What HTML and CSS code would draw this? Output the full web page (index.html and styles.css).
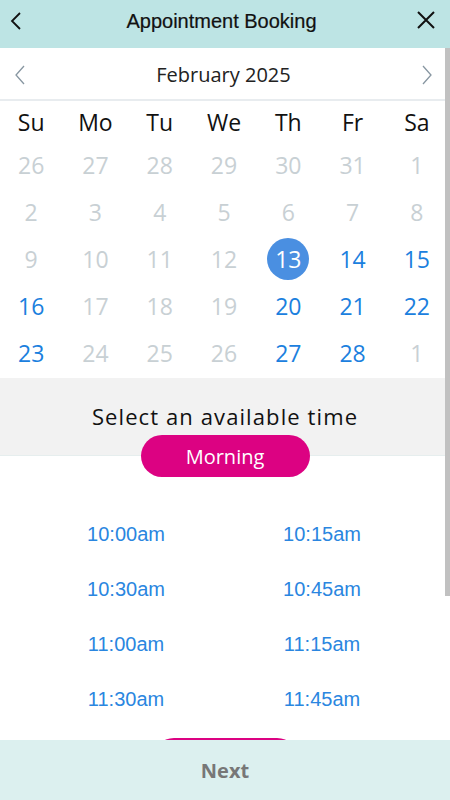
FILE: index.html
```html
<!DOCTYPE html>
<html lang="en">
<head>
<meta charset="utf-8">
<title>Appointment Booking</title>
<link rel="stylesheet" href="styles.css">
</head>
<body>
<div class="app">
  <header class="topbar">
    <button class="icon-btn back" aria-label="Back">
      <svg width="14" height="20" viewBox="0 0 14 20"><path d="M11 2 L3 10 L11 18" fill="none" stroke="#111" stroke-width="1.8"/></svg>
    </button>
    <h1 class="title">Appointment Booking</h1>
    <button class="icon-btn close" aria-label="Close">
      <svg width="20" height="20" viewBox="0 0 20 20"><path d="M2 2 L18 18 M18 2 L2 18" fill="none" stroke="#111" stroke-width="2"/></svg>
    </button>
  </header>

  <main class="content">
    <div class="month-row">
      <span class="chev">
        <svg width="12" height="20" viewBox="0 0 12 20"><path d="M10 1 L2 10 L10 19" fill="none" stroke="#8796a1" stroke-width="1.3"/></svg>
      </span>
      <span class="month">February 2025</span>
      <span class="chev">
        <svg width="12" height="20" viewBox="0 0 12 20"><path d="M2 1 L10 10 L2 19" fill="none" stroke="#8796a1" stroke-width="1.3"/></svg>
      </span>
    </div>

    <div class="calendar">
      <div class="wd">Su</div><div class="wd">Mo</div><div class="wd">Tu</div><div class="wd">We</div><div class="wd">Th</div><div class="wd">Fr</div><div class="wd">Sa</div>

      <div class="d off">26</div><div class="d off">27</div><div class="d off">28</div><div class="d off">29</div><div class="d off">30</div><div class="d off">31</div><div class="d off">1</div>
      <div class="d off">2</div><div class="d off">3</div><div class="d off">4</div><div class="d off">5</div><div class="d off">6</div><div class="d off">7</div><div class="d off">8</div>
      <div class="d off">9</div><div class="d off">10</div><div class="d off">11</div><div class="d off">12</div><div class="d on"><span class="sel">13</span></div><div class="d on">14</div><div class="d on">15</div>
      <div class="d on">16</div><div class="d off">17</div><div class="d off">18</div><div class="d off">19</div><div class="d on">20</div><div class="d on">21</div><div class="d on">22</div>
      <div class="d on">23</div><div class="d off">24</div><div class="d off">25</div><div class="d off">26</div><div class="d on">27</div><div class="d on">28</div><div class="d off">1</div>
    </div>

    <section class="time-head">
      <h2 class="time-title">Select an available time</h2>
    </section>
    <div class="pill-row">
      <span class="pill">Morning</span>
    </div>

    <div class="slots">
      <div class="slot">10:00am</div><div class="slot">10:15am</div>
      <div class="slot">10:30am</div><div class="slot">10:45am</div>
      <div class="slot">11:00am</div><div class="slot">11:15am</div>
      <div class="slot">11:30am</div><div class="slot">11:45am</div>
    </div>
    <div class="pill-row next-pill-row">
      <span class="pill pill-small" aria-hidden="true"></span>
    </div>

    <div class="scrollbar"></div>
  </main>

  <footer class="footer">
    <button class="next-btn">Next</button>
  </footer>
</div>
</body>
</html>
```

FILE: styles.css
```css
* { box-sizing: border-box; }

html, body {
  margin: 0;
  padding: 0;
  background: #ffffff;
}

.app {
  width: 450px;
  height: 800px;
  display: flex;
  flex-direction: column;
  overflow: hidden;
  font-family: "Open Sans", "Liberation Sans", sans-serif;
}

.topbar {
  height: 48px;
  flex: 0 0 48px;
  background: #bde4e4;
  display: flex;
  align-items: flex-start;
  justify-content: space-between;
  padding: 0 14px 0 9px;
}

.icon-btn {
  border: 0;
  background: none;
  padding: 0;
  margin-top: 11px;
  display: flex;
  cursor: pointer;
}

.close { margin-top: 10px; }

.title {
  margin: 9px 0 0 4px;
  font-family: "Liberation Sans", Arial, sans-serif;
  font-weight: normal;
  font-size: 20px;
  line-height: 24px;
  color: #111;
  -webkit-text-stroke: 0.2px #111;
}

.content {
  flex: 1 1 auto;
  overflow: hidden;
  position: relative;
}

.month-row {
  height: 53px;
  display: flex;
  align-items: center;
  justify-content: space-between;
  padding: 0 17px 0 14px;
  border-bottom: 2px solid #e8ecef;
}

.chev { display: flex; margin-top: 2px; }

.month {
  font-size: 20px;
  color: #222;
  margin-top: 1px;
}

.calendar {
  display: grid;
  grid-template-columns: repeat(7, 1fr);
  grid-template-rows: 41px;
  grid-auto-rows: 47px;
  padding: 0 1px 1px 0;
  margin-left: -1px;
  height: 277px;
}

.wd, .d {
  display: flex;
  align-items: center;
  justify-content: center;
  font-size: 23px;
}

.wd { color: #111; }

.d { padding-bottom: 2px; }

.d.off { color: #c8d0d4; }
.d.on { color: #1b80de; }

.sel {
  width: 42px;
  height: 42px;
  border-radius: 50%;
  background: #4a8fe1;
  color: #fff;
  display: flex;
  align-items: center;
  justify-content: center;
  margin-top: 1px;
}

.time-head {
  height: 78px;
  background: #f2f2f2;
  border-bottom: 1px solid #e6eeee;
  display: flex;
  justify-content: center;
  padding-top: 24px;
}

.time-title {
  margin: 0;
  font-weight: normal;
  font-size: 22px;
  line-height: 28px;
  letter-spacing: 1.1px;
  color: #111;
}

.pill-row {
  display: flex;
  justify-content: center;
  margin-top: -21px;
  position: relative;
}

.pill {
  width: 169px;
  height: 42px;
  border-radius: 21px;
  background: #dc0282;
  color: #fff;
  font-size: 20px;
  display: flex;
  align-items: center;
  justify-content: center;
}

.slots {
  display: grid;
  grid-template-columns: 1fr 1fr;
  grid-auto-rows: 55px;
  padding: 30px 30px 0 28px;
}

.slot {
  display: flex;
  align-items: center;
  justify-content: center;
  font-family: "Liberation Sans", Arial, sans-serif;
  font-size: 20px;
  color: #2a86e0;
}

.next-pill-row { margin-top: 11px; }

.pill-small { width: 145px; }

.scrollbar {
  position: absolute;
  right: 0;
  top: 0;
  width: 5px;
  height: 548px;
  background: #c1c1c1;
}

.footer {
  flex: 0 0 60px;
  height: 60px;
  background: #dcf0ef;
  display: flex;
  align-items: center;
  justify-content: center;
}

.next-btn {
  border: 0;
  background: none;
  font-family: "Open Sans", "Liberation Sans", sans-serif;
  font-weight: bold;
  font-size: 20px;
  color: #777;
  padding: 0;
  margin-top: 0;
}
```
